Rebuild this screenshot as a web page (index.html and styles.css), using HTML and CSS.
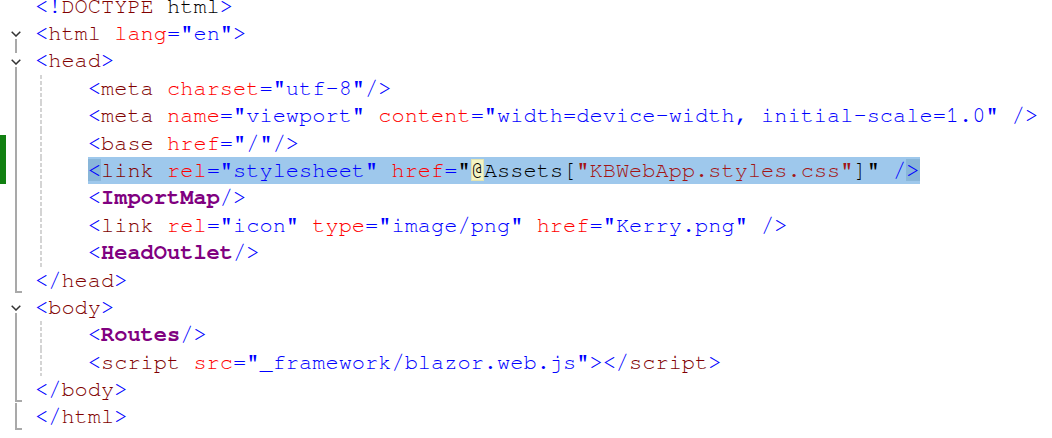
FILE: index.html
```html
<!DOCTYPE html>
<html lang="en">

<head>
    <meta charset="utf-8">
    <title>App.razor</title>
    <link rel="stylesheet" href="styles.css">
</head>

<body>
    <div class="editor">
        <div class="ln"><span class="chg"></span><span class="fold"></span><span class="code"><b class="p">&lt;!</b><b class="t">DOCTYPE</b><b class="k"> html</b><b class="p">&gt;</b></span></div>
        <div class="ln"><span class="chg"></span><span class="fold open"><svg width="10" height="6" viewBox="0 0 10 6"><path d="M0.7 0.7 L5 5 L9.3 0.7" /></svg></span><span class="code"><b class="p">&lt;</b><b class="t">html</b> <b class="a">lang</b><b class="p">="en"&gt;</b></span></div>
        <div class="ln"><span class="chg"></span><span class="fold open nested"><svg width="10" height="6" viewBox="0 0 10 6"><path d="M0.7 0.7 L5 5 L9.3 0.7" /></svg></span><span class="code"><b class="p">&lt;</b><b class="t">head</b><b class="p">&gt;</b></span></div>
        <div class="ln"><span class="chg"></span><span class="fold in"></span><span class="code guide">    <b class="p">&lt;</b><b class="t">meta</b> <b class="a">charset</b><b class="p">="utf-8"/&gt;</b></span></div>
        <div class="ln"><span class="chg"></span><span class="fold in"></span><span class="code guide">    <b class="p">&lt;</b><b class="t">meta</b> <b class="a">name</b><b class="p">="viewport"</b> <b class="a">content</b><b class="p">="width=device-width, initial-scale=1.0" /&gt;</b></span></div>
        <div class="ln"><span class="chg part"></span><span class="fold in"></span><span class="code guide">    <b class="p">&lt;</b><b class="t">base</b> <b class="a">href</b><b class="p">="/"/&gt;</b></span></div>
        <div class="ln"><span class="chg on"></span><span class="fold in"></span><span class="code guide">    <span class="sel"><b class="p match">&lt;</b><b class="t">link</b> <b class="a">rel</b><b class="p">="stylesheet"</b> <b class="a">href</b><b class="p">=</b><b class="k">"</b><b class="k at">@</b><b class="k">Assets[</b><b class="s">"KBWebApp.styles.css"</b><b class="k">]"</b> <b class="p">/</b><b class="p match">&gt;</b></span></span></div>
        <div class="ln"><span class="chg"></span><span class="fold in"></span><span class="code guide">    <b class="p">&lt;</b><b class="c">ImportMap</b><b class="p">/&gt;</b></span></div>
        <div class="ln"><span class="chg"></span><span class="fold in"></span><span class="code guide">    <b class="p">&lt;</b><b class="t">link</b> <b class="a">rel</b><b class="p">="icon"</b> <b class="a">type</b><b class="p">="image/png"</b> <b class="a">href</b><b class="p">="Kerry.png" /&gt;</b></span></div>
        <div class="ln"><span class="chg"></span><span class="fold in"></span><span class="code guide">    <b class="p">&lt;</b><b class="c">HeadOutlet</b><b class="p">/&gt;</b></span></div>
        <div class="ln"><span class="chg"></span><span class="fold end"></span><span class="code"><b class="p">&lt;/</b><b class="t">head</b><b class="p">&gt;</b></span></div>
        <div class="ln"><span class="chg"></span><span class="fold open"><svg width="10" height="6" viewBox="0 0 10 6"><path d="M0.7 0.7 L5 5 L9.3 0.7" /></svg></span><span class="code"><b class="p">&lt;</b><b class="t">body</b><b class="p">&gt;</b></span></div>
        <div class="ln"><span class="chg"></span><span class="fold in"></span><span class="code guide">    <b class="p">&lt;</b><b class="c">Routes</b><b class="p">/&gt;</b></span></div>
        <div class="ln"><span class="chg"></span><span class="fold in"></span><span class="code guide">    <b class="p">&lt;</b><b class="t">script</b> <b class="a">src</b><b class="p">="_framework/blazor.web.js"&gt;&lt;/</b><b class="t">script</b><b class="p">&gt;</b></span></div>
        <div class="ln"><span class="chg"></span><span class="fold end"></span><span class="code"><b class="p">&lt;/</b><b class="t">body</b><b class="p">&gt;</b></span></div>
        <div class="ln"><span class="chg"></span><span class="fold end"></span><span class="code"><b class="p">&lt;/</b><b class="t">html</b><b class="p">&gt;</b></span></div>
    </div>
</body>

</html>
```

FILE: styles.css
```css
body {
    margin: 0;
    background: #fff;
    overflow: hidden;
}

.editor {
    margin-top: -7.4px;
    font-family: "Nimbus Mono PS", "FreeMono", "Courier New", "Liberation Mono", monospace;
    font-size: 22px;
    line-height: 27.4px;
}

.ln {
    display: flex;
    height: 27.4px;
}

.ln b {
    font-weight: normal;
}

/* change bar */
.chg {
    width: 6px;
    flex: none;
}

.chg.on {
    background: #118011;
}

.chg.part {
    background: linear-gradient(#118011, #118011) 0 5px / 100% 100% no-repeat;
}

/* fold margin */
.fold {
    width: 29px;
    flex: none;
    display: flex;
    align-items: center;
    background-repeat: no-repeat;
}

.fold svg {
    margin-left: 5px;
    margin-top: 1px;
}

.fold svg path {
    fill: none;
    stroke: #333;
    stroke-width: 1.5;
}

.fold.in {
    background-image: linear-gradient(#a9a9a9, #a9a9a9);
    background-position: 9px 0;
    background-size: 2px 100%;
}

.fold.end {
    background-image: linear-gradient(#a9a9a9, #a9a9a9), linear-gradient(#a9a9a9, #a9a9a9);
    background-position: 9px 0, 9px calc(100% - 1px);
    background-size: 2px calc(100% - 1px), 7px 2px;
}

.fold.open {
    background-image: linear-gradient(#a9a9a9, #a9a9a9);
    background-position: 9px 100%;
    background-size: 2px 8px;
}

.fold.open.nested {
    background-image: linear-gradient(#a9a9a9, #a9a9a9), linear-gradient(#a9a9a9, #a9a9a9);
    background-position: 9px 100%, 9px 0;
    background-size: 2px 8px, 2px 6px;
}

.code {
    white-space: pre;
    color: #000;
}

.code.guide {
    background-image: repeating-linear-gradient(#d4d4d4 0 4px, transparent 4px 6px);
    background-position: 5px 0;
    background-size: 2px 100%;
    background-repeat: no-repeat;
}

/* syntax colours */
.p {
    color: #0000ff;
}

.t {
    color: #800000;
}

.a {
    color: #ff0000;
}

.k {
    color: #000;
}

.s {
    color: #a31515;
}

.ln b.c {
    color: #800080;
    font-weight: bold;
}

.sel {
    display: inline-block;
    background: #9ec8ec;
}

.match {
    background: #89b6d9;
}

.at {
    background: #f4f4c4;
    box-shadow: inset 0 0 0 1px #e4e4b0;
}
```
